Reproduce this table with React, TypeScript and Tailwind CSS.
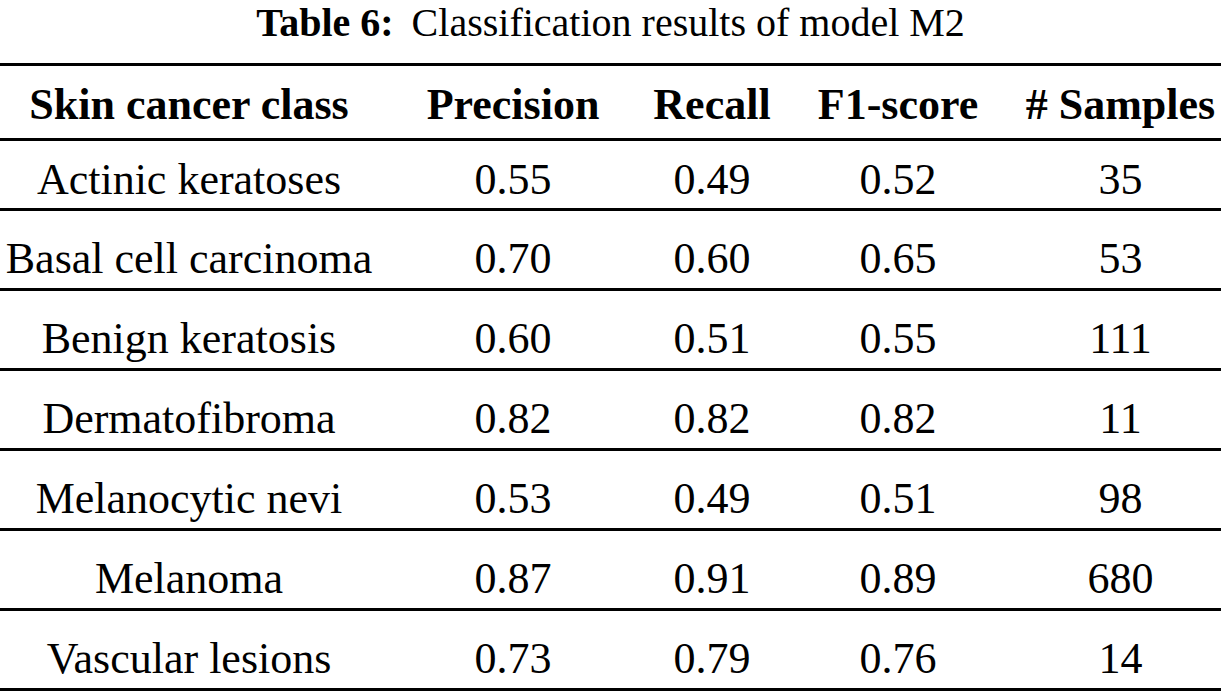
const rows = [
  ["Actinic keratoses", "0.55", "0.49", "0.52", "35"],
  ["Basal cell carcinoma", "0.70", "0.60", "0.65", "53"],
  ["Benign keratosis", "0.60", "0.51", "0.55", "111"],
  ["Dermatofibroma", "0.82", "0.82", "0.82", "11"],
  ["Melanocytic nevi", "0.53", "0.49", "0.51", "98"],
  ["Melanoma", "0.87", "0.91", "0.89", "680"],
  ["Vascular lesions", "0.73", "0.79", "0.76", "14"],
];

const headers = ["Skin cancer class", "Precision", "Recall", "F1-score", "# Samples"];

const cols = "grid grid-cols-[378px_270px_128px_244px_201px] items-center";

export default function App() {
  return (
    <main
      className="h-[693px] w-[1221px] overflow-hidden bg-white text-black"
      style={{ fontFamily: '"Liberation Serif", "Times New Roman", serif' }}
    >
      <div className="flex h-[63px] items-start justify-center text-[40px] leading-[45px]">
        <span className="font-bold">Table 6:</span>
        <span className="ml-[18px]">Classification results of model M2</span>
      </div>

      <div className="border-t-[3px] border-black">
        <div className={`${cols} h-[75px] border-b-[3px] border-black pt-[5px] text-[44px] font-bold`}>
          {headers.map((h) => (
            <div key={h} className="whitespace-nowrap text-center">
              {h}
            </div>
          ))}
        </div>

        {rows.map((row, i) => (
          <div
            key={row[0]}
            className={`${cols} ${i === 0 ? "h-[70px] pt-[6px]" : "h-[80px] pt-[15px]"} border-b-[3px] border-black text-[44px]`}
          >
            {row.map((cell, j) => (
              <div key={j} className="whitespace-nowrap text-center">
                {cell}
              </div>
            ))}
          </div>
        ))}
      </div>
    </main>
  );
}
